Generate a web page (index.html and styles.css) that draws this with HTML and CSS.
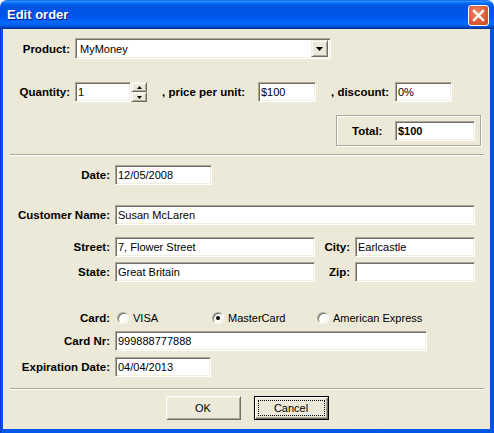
FILE: index.html
```html
<!DOCTYPE html>
<html lang="en">
<head>
    <meta charset="UTF-8">
    <title>Edit order</title>
    <link rel="stylesheet" href="styles.css">
</head>
<body>

<div class="window">
    <div class="titlebar">
        <span class="title">Edit order</span>
        <button class="close" title="Close">
            <svg width="13" height="13" viewBox="0 0 13 13">
                <path d="M2 2 L11 11 M11 2 L2 11" stroke="#fff" stroke-width="2.4" stroke-linecap="square" fill="none"/>
            </svg>
        </button>
    </div>

    <div class="frame">
        <div class="content">

            <!-- product / pricing -->
            <div class="row product-row">
                <label class="lbl lbl-top">Product:</label>
                <div class="combo">
                    <span class="combo-value">MyMoney</span>
                    <span class="combo-btn">
                        <svg width="7" height="4" viewBox="0 0 7 4"><path d="M0 0 H7 L3.5 4 Z" fill="#000"/></svg>
                    </span>
                </div>
            </div>

            <div class="row qty-row">
                <label class="lbl lbl-top">Quantity:</label>
                <input class="field w-qty" type="text" value="1">
                <div class="spin">
                    <span class="spin-btn"><svg width="5" height="3" viewBox="0 0 5 3"><path d="M0 3 H5 L2.5 0 Z" fill="#000"/></svg></span>
                    <span class="spin-btn"><svg width="5" height="3" viewBox="0 0 5 3"><path d="M0 0 H5 L2.5 3 Z" fill="#000"/></svg></span>
                </div>
                <label class="lbl-inline price-lbl">, price per unit:</label>
                <input class="field w-price" type="text" value="$100">
                <label class="lbl-inline discount-lbl">, discount:</label>
                <input class="field w-discount" type="text" value="0%">
            </div>

            <div class="groupbox">
                <label class="lbl-inline total-lbl">Total:</label>
                <input class="field w-total bold" type="text" value="$100">
            </div>

            <div class="sep sep-1"></div>

            <!-- customer -->
            <div class="row date-row">
                <label class="lbl">Date:</label>
                <input class="field w-date" type="text" value="12/05/2008">
            </div>

            <div class="row customer-row">
                <label class="lbl">Customer Name:</label>
                <input class="field w-customer" type="text" value="Susan McLaren">
            </div>

            <div class="row street-row">
                <label class="lbl">Street:</label>
                <input class="field w-street" type="text" value="7, Flower Street">
                <label class="lbl-side">City:</label>
                <input class="field w-city" type="text" value="Earlcastle">
            </div>

            <div class="row state-row">
                <label class="lbl">State:</label>
                <input class="field w-street" type="text" value="Great Britain">
                <label class="lbl-side">Zip:</label>
                <input class="field w-city" type="text" value="">
            </div>

            <!-- payment -->
            <div class="row card-row">
                <label class="lbl">Card:</label>
                <div class="radios">
                    <div class="opt opt-visa"><span class="radio"></span>VISA</div>
                    <div class="opt opt-master"><span class="radio checked"></span>MasterCard</div>
                    <div class="opt"><span class="radio"></span>American Express</div>
                </div>
            </div>

            <div class="row cardnr-row">
                <label class="lbl">Card Nr:</label>
                <input class="field w-cardnr" type="text" value="999888777888">
            </div>

            <div class="row exp-row">
                <label class="lbl">Expiration Date:</label>
                <input class="field w-exp" type="text" value="04/04/2013">
            </div>

            <div class="sep sep-2"></div>

            <div class="buttons">
                <button class="btn">OK</button>
                <button class="btn btn-default"><span class="focus">Cancel</span></button>
            </div>

        </div>
    </div>
</div>

</body>
</html>
```

FILE: styles.css
```css
body {
    margin: 0;
    background: #fff;
    font-family: "Liberation Sans", Arial, sans-serif;
    font-size: 11px;
    color: #000;
}
.window {
    width: 494px;
    height: 433px;
    overflow: hidden;
}

/* title bar */
.titlebar {
    height: 29px;
    display: flex;
    justify-content: space-between;
    align-items: flex-start;
    padding: 0 5px 0 7px;
    box-sizing: border-box;
    border-radius: 7px 7px 0 0;
    background: linear-gradient(to bottom, #0058ee 0%, #3593ff 4%, #288eff 6%, #127dff 8%, #036ffc 10%, #0262ee 14%, #0057e5 20%, #0054e3 24%, #0055eb 56%, #005bf5 66%, #026afe 76%, #0062ef 86%, #0052d6 92%, #0040ab 96%, #003092 100%);
}
.title {
    font-weight: bold;
    font-size: 13px;
    color: #fff;
    line-height: 29px;
    text-shadow: 1px 1px #0f1089;
}
.close {
    width: 21px;
    height: 21px;
    margin-top: 5px;
    padding: 0;
    border: 1px solid #fff;
    border-radius: 3px;
    background: radial-gradient(circle at 40% 35%, #f08e6a 0%, #e0643b 45%, #c84a23 100%);
    display: flex;
    align-items: center;
    justify-content: center;
}

/* frame */
.frame {
    height: 404px;
    padding: 0 4px 4px 3px;
    box-sizing: border-box;
    background: linear-gradient(to right, #0831d9 0px, #0058ee 2px, #0055e5 100%);
}
.content {
    height: 400px;
    background: #ece9d8;
    padding: 9px 6px 0 7px;
    box-sizing: border-box;
}

.row {
    display: flex;
    align-items: center;
}
.lbl {
    width: 100px;
    margin-right: 5px;
    text-align: right;
    font-weight: bold;
    font-size: 11.5px;
    white-space: nowrap;
}
.lbl-top {
    width: 60px;
}
.lbl-inline {
    font-weight: bold;
    font-size: 11.5px;
    white-space: nowrap;
}
.lbl-side {
    width: 35px;
    padding-right: 5px;
    text-align: right;
    font-weight: bold;
    font-size: 11.5px;
}

/* sunken text field */
.field {
    height: 20px;
    box-sizing: border-box;
    margin: 0;
    padding: 0 2px;
    font-family: "Liberation Sans", Arial, sans-serif;
    font-size: 11px;
    color: #000;
    background: #fff;
    border: 1px solid;
    border-color: #aca899 #fff #fff #aca899;
    box-shadow: inset 1px 1px #716f64, inset -1px -1px #f1efe2;
    outline: none;
}
.bold {
    font-weight: bold;
}

.product-row {
    height: 21px;
}
.combo {
    width: 256px;
    height: 21px;
    box-sizing: border-box;
    display: flex;
    align-items: center;
    justify-content: space-between;
    background: #fff;
    border: 1px solid;
    border-color: #aca899 #fff #fff #aca899;
    box-shadow: inset 1px 1px #716f64, inset -1px -1px #f1efe2;
    padding: 2px 2px 2px 4px;
}
.combo-btn,
.spin-btn {
    display: flex;
    align-items: center;
    justify-content: center;
    box-sizing: border-box;
    background: #ece9d8;
    border: 1px solid;
    border-color: #f1efe2 #716f64 #716f64 #f1efe2;
    box-shadow: inset 1px 1px #fff, inset -1px -1px #aca899;
}
.combo-btn {
    width: 17px;
    height: 17px;
}

.qty-row {
    margin-top: 23px;
    height: 20px;
}
.w-qty { width: 56px; }
.spin {
    width: 16px;
    height: 20px;
    display: flex;
    flex-direction: column;
}
.spin-btn {
    height: 10px;
}
.price-lbl {
    width: 96px;
    margin-left: 15px;
}
.w-price { width: 58px; }
.discount-lbl {
    width: 64px;
    margin-left: 15px;
}
.w-discount { width: 57px; }

.groupbox {
    width: 145px;
    height: 31px;
    box-sizing: border-box;
    margin: 13px 0 0 326px;
    display: flex;
    align-items: center;
    border: 1px solid #aca899;
    box-shadow: inset 1px 1px #fff, 1px 1px #fff;
}
.total-lbl {
    width: 43px;
    padding-left: 15px;
}
.w-total { width: 80px; }

.sep {
    height: 0;
    border-top: 1px solid #aca899;
    border-bottom: 1px solid #fff;
}
.sep-1 { margin-top: 8px; }
.sep-2 { margin-top: 11px; }

.date-row { margin-top: 9px; }
.w-date { width: 97px; }
.customer-row { margin-top: 20px; }
.w-customer { width: 360px; }
.street-row { margin-top: 12px; }
.w-street { width: 200px; }
.w-city { width: 120px; }
.state-row { margin-top: 5px; }

.card-row {
    margin-top: 28px;
    height: 16px;
}
.radios {
    display: flex;
    margin-left: 2px;
}
.opt {
    display: flex;
    align-items: center;
}
.opt-visa { width: 95px; }
.opt-master { width: 105px; }
.radio {
    width: 12px;
    height: 12px;
    box-sizing: border-box;
    margin-right: 4px;
    border-radius: 50%;
    background: #fff;
    border: 1px solid;
    border-color: #aca899 #fff #fff #aca899;
    box-shadow: inset 1px 1px #716f64, inset -1px -1px #f1efe2;
    position: relative;
}
.radio.checked::after {
    content: "";
    position: absolute;
    left: 3px;
    top: 3px;
    width: 4px;
    height: 4px;
    border-radius: 50%;
    background: #000;
}
.cardnr-row { margin-top: 5px; }
.w-cardnr { width: 312px; }
.exp-row { margin-top: 6px; }
.w-exp { width: 96px; }

/* buttons */
.buttons {
    display: flex;
    justify-content: center;
    gap: 13px;
    margin-top: 6px;
}
.btn {
    width: 75px;
    height: 24px;
    padding: 0;
    font-family: "Liberation Sans", Arial, sans-serif;
    font-size: 11px;
    color: #000;
    background: #ece9d8;
    border: 1px solid;
    border-color: #fff #716f64 #716f64 #fff;
    box-shadow: inset 1px 1px #f1efe2, inset -1px -1px #aca899;
}
.btn-default {
    border: 1px solid #000;
    box-shadow: inset 1px 1px #fff, inset -1px -1px #716f64, inset -2px -2px #aca899;
    padding: 3px;
}
.focus {
    display: flex;
    align-items: center;
    justify-content: center;
    height: 100%;
    box-sizing: border-box;
    border: 1px dotted #000;
}
```
